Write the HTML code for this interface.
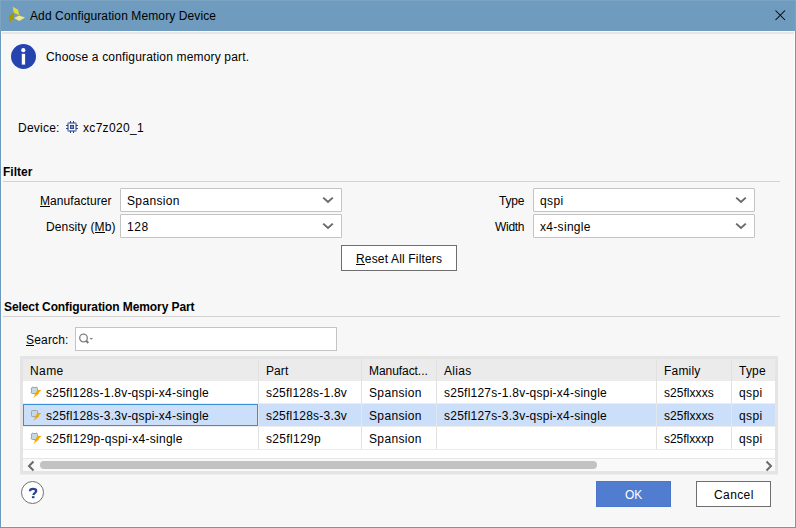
<!DOCTYPE html>
<html><head><meta charset="utf-8">
<style>
*{margin:0;padding:0;box-sizing:border-box}
html,body{width:796px;height:528px;overflow:hidden;background:#f7f7f7}
body{position:relative;font-family:"Liberation Sans",sans-serif;font-size:12px;color:#000}
.a{position:absolute}
.t{position:absolute;white-space:nowrap;line-height:14px}
u{text-decoration:none;position:relative}
u:after{content:"";position:absolute;left:0;right:0;bottom:1px;height:1px;background:#000}
.combo{position:absolute;width:222px;height:24px;background:#fff;border:1px solid #c4c4c4;border-radius:1px}
.sep{position:absolute;height:1px;background:#d2d2d2}
.btn{position:absolute;background:#fff;border:1px solid #6e6e6e}
.vl{position:absolute;width:1px;background:#e1e1e1}
.hl{position:absolute;height:1px;background:#ececec}
</style></head><body>
<div class="a" style="left:0;top:0;width:796px;height:31px;background:#6e9bbe;border:1px solid #7ca3c2;border-bottom:none"></div>
<div class="a" style="left:0;top:31px;width:796px;height:497px;border:1px solid #6b98bc;border-top:none"></div>
<div class="a" style="left:1px;top:31px;width:794px;height:496px;border:1px solid #fcfcfc;border-top:1px solid #fafafa"></div>
<svg class="a" style="left:8px;top:6px" width="18" height="18" viewBox="8 6 18 18">
 <polygon points="12.8,6.8 18.2,9.7 19.3,15.2 13.7,12.8" fill="#e2d93a"/>
 <polygon points="8.8,16.2 13.9,12.2 13.9,19.1 9.1,22.3" fill="#a39900"/>
 <polygon points="14,17.9 19.2,15.6 25,17.6 19.4,21" fill="#eee78c"/>
</svg>
<div class="t" style="left:30px;top:9px;letter-spacing:0.109px">Add Configuration Memory Device</div>
<svg class="a" style="left:774px;top:9px" width="13" height="13" viewBox="0 0 13 13"><path d="M1.5 1.5L11 11M11 1.5L1.5 11" stroke="#000" stroke-width="1.05"/></svg>
<div class="a" style="left:2px;top:32px;width:792px;height:2px;background:#e6e6e6"></div>
<svg class="a" style="left:11px;top:44px" width="25" height="25" viewBox="0 0 25 25">
 <circle cx="12.5" cy="12.5" r="12.5" fill="#2644b0"/>
 <circle cx="12.3" cy="6.2" r="2.1" fill="#fff"/>
 <rect x="10.8" y="9.8" width="3.3" height="10.8" fill="#fff"/>
</svg>
<div class="t" style="left:46px;top:50px;letter-spacing:0.165px">Choose a configuration memory part.</div>
<div class="t" style="left:18px;top:121px;letter-spacing:0.234px">Device:</div>
<svg class="a" style="left:64px;top:119px" width="16" height="16" viewBox="64 119 16 16" shape-rendering="crispEdges">
 <rect x="68" y="123" width="8" height="8" rx="1.2" fill="none" stroke="#8494bf" stroke-width="2" shape-rendering="geometricPrecision"/>
 <path d="M70 121h1v2h-1zM73 121h1v2h-1zM70 131h1v2h-1zM73 131h1v2h-1zM66 125h2v1h-2zM66 128h2v1h-2zM76 125h2v1h-2zM76 128h2v1h-2z" fill="#2c4a8c"/>
 <path d="M70 125h4v1h-4zM70 128h4v1h-4zM70 126h1v2h-1zM73 126h1v2h-1z" fill="#2c4a8c"/>
 <path d="M71 126h2v2h-2z" fill="#8191b8"/>
</svg>
<div class="t" style="left:83px;top:121px;letter-spacing:0.314px">xc7z020_1</div>
<div class="t" style="left:3px;top:165px;letter-spacing:0.006px;font-weight:bold">Filter</div>
<div class="sep" style="left:3px;top:181px;width:777px"></div>
<div class="t" style="left:40px;top:194px;letter-spacing:0.074px"><u>M</u>anufacturer</div>
<div class="combo" style="left:120px;top:188px"><svg class="a" style="left:201px;top:7px" width="12" height="8" viewBox="0 0 12 8"><path d="M1.2 1.6L6 6L10.8 1.6" fill="none" stroke="#696969" stroke-width="1.9"/></svg></div>
<div class="t" style="left:127px;top:194px;letter-spacing:0.350px">Spansion</div>
<div class="t" style="left:46px;top:220px;letter-spacing:0.135px">Density (<u>M</u>b)</div>
<div class="combo" style="left:120px;top:214px"><svg class="a" style="left:201px;top:7px" width="12" height="8" viewBox="0 0 12 8"><path d="M1.2 1.6L6 6L10.8 1.6" fill="none" stroke="#696969" stroke-width="1.9"/></svg></div>
<div class="t" style="left:127px;top:220px;letter-spacing:0.582px">128</div>
<div class="t" style="left:499px;top:194px;letter-spacing:-0.172px">Type</div>
<div class="combo" style="left:533px;top:188px"><svg class="a" style="left:201px;top:7px" width="12" height="8" viewBox="0 0 12 8"><path d="M1.2 1.6L6 6L10.8 1.6" fill="none" stroke="#696969" stroke-width="1.9"/></svg></div>
<div class="t" style="left:540px;top:194px;letter-spacing:0.408px">qspi</div>
<div class="t" style="left:495px;top:220px;letter-spacing:-0.293px">Width</div>
<div class="combo" style="left:533px;top:214px"><svg class="a" style="left:201px;top:7px" width="12" height="8" viewBox="0 0 12 8"><path d="M1.2 1.6L6 6L10.8 1.6" fill="none" stroke="#696969" stroke-width="1.9"/></svg></div>
<div class="t" style="left:540px;top:220px;letter-spacing:0.309px">x4-single</div>
<div class="btn" style="left:341px;top:245px;width:116px;height:26px"></div>
<div class="t" style="left:356px;top:252px;letter-spacing:0.166px"><u>R</u>eset All Filters</div>
<div class="t" style="left:4px;top:300px;letter-spacing:-0.091px;font-weight:bold">Select Configuration Memory Part</div>
<div class="sep" style="left:3px;top:316px;width:777px"></div>
<div class="t" style="left:26px;top:333px;letter-spacing:0.179px"><u>S</u>earch:</div>
<div class="a" style="left:75px;top:327px;width:262px;height:24px;background:#fff;border:1px solid #c4c4c4"></div>
<svg class="a" style="left:78px;top:333px" width="16" height="12" viewBox="0 0 16 12">
 <circle cx="5.5" cy="5" r="3.8" fill="none" stroke="#808080" stroke-width="1.3"/>
 <path d="M8.2 7.8L10.3 10" stroke="#7a7a7a" stroke-width="2"/>
 <path d="M11.5 5h3.5l-1.75 1.8z" fill="#7a7a7a"/>
</svg>
<div class="a" style="left:20px;top:356px;width:758px;height:118px;border:3px solid #e4e4e4;background:#fff"></div>
<div class="a" style="left:20px;top:474px;width:758px;height:1px;background:#ededed"></div>
<div class="a" style="left:23px;top:359px;width:752px;height:22px;background:#ebebeb"></div>
<div class="vl" style="left:258px;top:359px;height:91px"></div>
<div class="vl" style="left:361px;top:359px;height:91px"></div>
<div class="vl" style="left:436px;top:359px;height:91px"></div>
<div class="vl" style="left:656px;top:359px;height:91px"></div>
<div class="vl" style="left:731px;top:359px;height:91px"></div>
<div class="hl" style="left:23px;top:403px;width:752px"></div>
<div class="hl" style="left:23px;top:426px;width:752px"></div>
<div class="hl" style="left:23px;top:449px;width:752px"></div>
<div class="a" style="left:23px;top:404px;width:752px;height:22px;background:#cbdffb"></div>
<div class="vl" style="left:258px;top:404px;height:22px;background:#e3e6ea"></div>
<div class="vl" style="left:361px;top:404px;height:22px;background:#e3e6ea"></div>
<div class="vl" style="left:436px;top:404px;height:22px;background:#e3e6ea"></div>
<div class="vl" style="left:656px;top:404px;height:22px;background:#e3e6ea"></div>
<div class="vl" style="left:731px;top:404px;height:22px;background:#e3e6ea"></div>
<div class="a" style="left:23px;top:404px;width:235px;height:22px;border:1px solid #3a8fd6"></div>
<div class="t" style="left:30px;top:364px;letter-spacing:0.408px">Name</div>
<div class="t" style="left:266px;top:364px;letter-spacing:0.080px">Part</div>
<div class="t" style="left:369px;top:364px;letter-spacing:-0.063px">Manufact...</div>
<div class="t" style="left:444px;top:364px;letter-spacing:0.321px">Alias</div>
<div class="t" style="left:664px;top:364px;letter-spacing:0.203px">Family</div>
<div class="t" style="left:739px;top:364px;letter-spacing:0.228px">Type</div>
<svg class="a" style="left:29px;top:385px" width="14" height="14" viewBox="0 0 14 14">
 <path d="M3.5 1v1.2M7.5 1v1.2M1.2 3.5h1.2M1.2 7.5h1.2" stroke="#dfe2e4" stroke-width="1"/>
 <rect x="2.5" y="2.5" width="6" height="6" rx="0.8" fill="#c6d8e5" stroke="#9ea4a8" stroke-width="1"/>
 <polygon points="8.6,5 12.3,5 9.3,8.3 10.3,8.3 4.3,13 6.1,9.8 5.3,9.8" fill="#f7a600"/>
</svg>
<div class="t" style="left:46px;top:386px;letter-spacing:0.238px">s25fl128s-1.8v-qspi-x4-single</div>
<div class="t" style="left:266px;top:386px;letter-spacing:0.216px">s25fl128s-1.8v</div>
<div class="t" style="left:369px;top:386px;letter-spacing:0.350px">Spansion</div>
<div class="t" style="left:444px;top:386px;letter-spacing:0.238px">s25fl127s-1.8v-qspi-x4-single</div>
<div class="t" style="left:664px;top:386px;letter-spacing:0.045px">s25flxxxs</div>
<div class="t" style="left:739px;top:386px;letter-spacing:0.408px">qspi</div>
<svg class="a" style="left:29px;top:408px" width="14" height="14" viewBox="0 0 14 14">
 <path d="M3.5 1v1.2M7.5 1v1.2M1.2 3.5h1.2M1.2 7.5h1.2" stroke="#dfe2e4" stroke-width="1"/>
 <rect x="2.5" y="2.5" width="6" height="6" rx="0.8" fill="#c6d8e5" stroke="#9ea4a8" stroke-width="1"/>
 <polygon points="8.6,5 12.3,5 9.3,8.3 10.3,8.3 4.3,13 6.1,9.8 5.3,9.8" fill="#f7a600"/>
</svg>
<div class="t" style="left:46px;top:409px;letter-spacing:0.238px">s25fl128s-3.3v-qspi-x4-single</div>
<div class="t" style="left:266px;top:409px;letter-spacing:0.216px">s25fl128s-3.3v</div>
<div class="t" style="left:369px;top:409px;letter-spacing:0.350px">Spansion</div>
<div class="t" style="left:444px;top:409px;letter-spacing:0.238px">s25fl127s-3.3v-qspi-x4-single</div>
<div class="t" style="left:664px;top:409px;letter-spacing:0.045px">s25flxxxs</div>
<div class="t" style="left:739px;top:409px;letter-spacing:0.408px">qspi</div>
<svg class="a" style="left:29px;top:431px" width="14" height="14" viewBox="0 0 14 14">
 <path d="M3.5 1v1.2M7.5 1v1.2M1.2 3.5h1.2M1.2 7.5h1.2" stroke="#dfe2e4" stroke-width="1"/>
 <rect x="2.5" y="2.5" width="6" height="6" rx="0.8" fill="#c6d8e5" stroke="#9ea4a8" stroke-width="1"/>
 <polygon points="8.6,5 12.3,5 9.3,8.3 10.3,8.3 4.3,13 6.1,9.8 5.3,9.8" fill="#f7a600"/>
</svg>
<div class="t" style="left:46px;top:432px;letter-spacing:0.277px">s25fl129p-qspi-x4-single</div>
<div class="t" style="left:266px;top:432px;letter-spacing:0.314px">s25fl129p</div>
<div class="t" style="left:369px;top:432px;letter-spacing:0.350px">Spansion</div>
<div class="t" style="left:664px;top:432px;letter-spacing:-0.039px">s25flxxxp</div>
<div class="t" style="left:739px;top:432px;letter-spacing:0.408px">qspi</div>
<div class="hl" style="left:23px;top:458px;width:752px;background:#e6e6e6"></div>
<div class="a" style="left:23px;top:459px;width:752px;height:12px;background:#f9f9f9"></div>
<div class="a" style="left:40px;top:461px;width:557px;height:8px;border-radius:4px;background:#c2c2c2"></div>
<svg class="a" style="left:27px;top:460px" width="9" height="12" viewBox="0 0 9 12"><path d="M6.5 1.5L2 6l4.5 4.5" fill="none" stroke="#6b6b6b" stroke-width="2"/></svg>
<svg class="a" style="left:764px;top:460px" width="9" height="12" viewBox="0 0 9 12"><path d="M2.5 1.5L7 6l-4.5 4.5" fill="none" stroke="#6b6b6b" stroke-width="2"/></svg>
<svg class="a" style="left:20px;top:480px" width="25" height="25" viewBox="0 0 25 25">
 <circle cx="12.5" cy="12.5" r="11" fill="#fff" stroke="#6f6f6f" stroke-width="1"/>
 <path d="M10 11.2C10 9.6 11.3 8.9 13 8.9C14.9 8.9 16.2 9.7 16.2 11C16.2 12.7 13.8 12.8 13.3 15" fill="none" stroke="#27458f" stroke-width="2.3"/>
 <rect x="11.9" y="16.2" width="2.6" height="2" fill="#27458f"/>
</svg>
<div class="a" style="left:596px;top:481px;width:75px;height:26px;background:#507dd0;border:1px solid #4b77cb"></div>
<div class="t" style="left:625px;top:488px;letter-spacing:-0.208px;color:#ffffff">OK</div>
<div class="btn" style="left:696px;top:481px;width:75px;height:26px"></div>
<div class="t" style="left:714px;top:488px;letter-spacing:0.400px">Cancel</div>
</body></html>
